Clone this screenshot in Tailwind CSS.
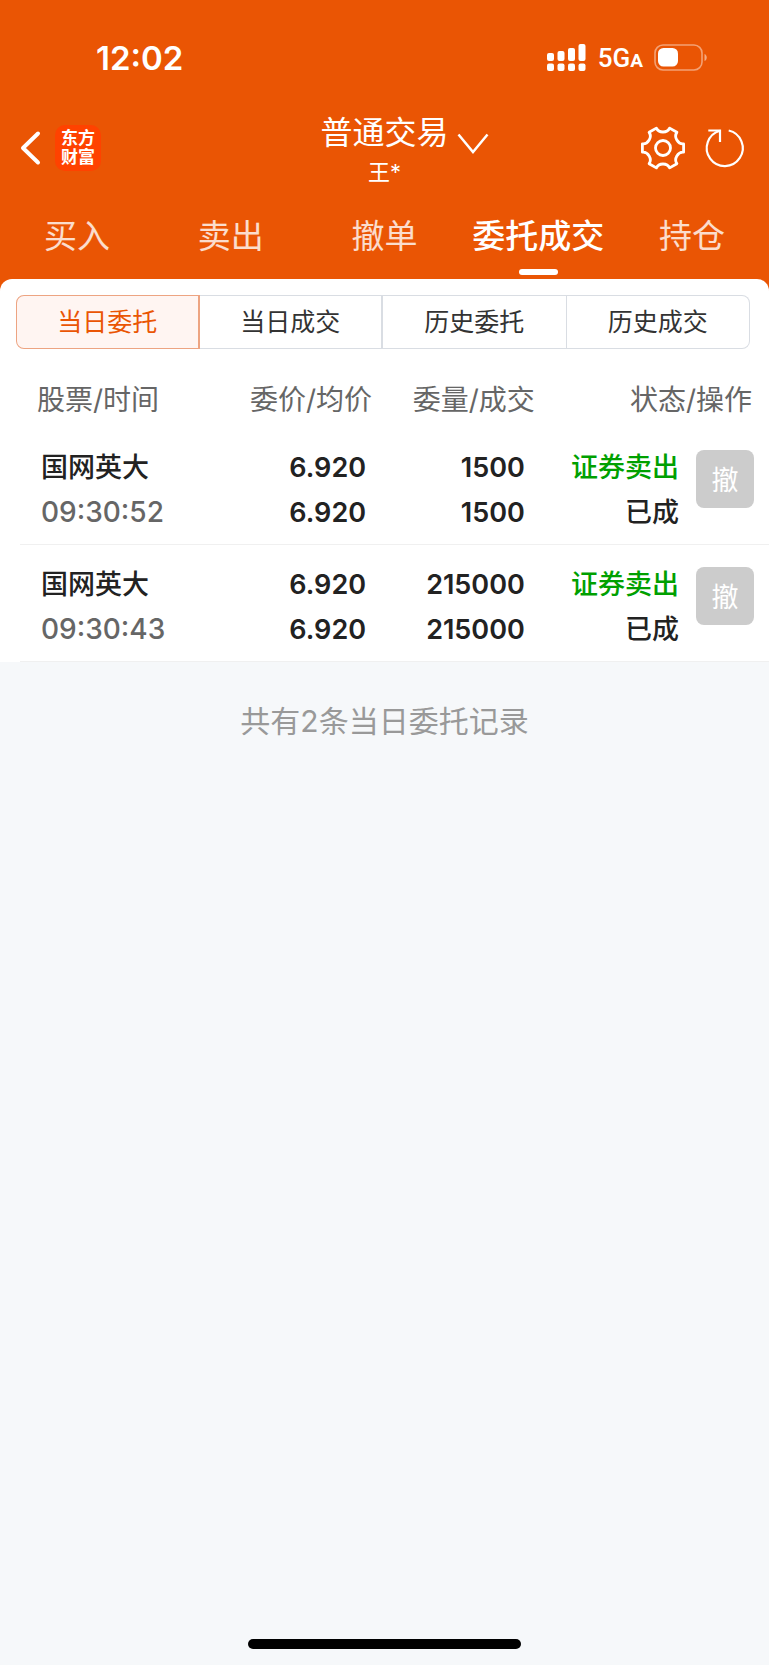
<!DOCTYPE html>
<html lang="zh-CN">
<head>
  <meta charset="UTF-8" />
  <meta name="viewport" content="width=device-width, initial-scale=1.0"/>
  <title>普通交易 | 委托成交</title>
  <script src="https://cdn.jsdelivr.net/npm/@tailwindcss/browser@4"></script>
</head>
<body class="flex min-h-screen flex-col bg-[#f6f8fa] font-['Inter','Noto_Sans_CJK_SC',sans-serif] text-[#222222]">

  <header class="bg-[#ea5504] text-white">
    <!-- Status bar -->
    <div class="flex h-[112px] items-center justify-between pt-[3px] pr-[61px] pl-24">
      <span class="text-[33px] leading-10 font-semibold">12:02</span>
      <div class="flex items-center">
        <svg class="h-7 w-[39px]" viewBox="0 0 39 28" fill="currentColor" aria-hidden="true">
          <rect x="0" y="9" width="7" height="8" rx="2"/>
          <rect x="10.5" y="7" width="7" height="10" rx="2"/>
          <rect x="21" y="4" width="7" height="13" rx="2"/>
          <rect x="31.5" y="0" width="7" height="17" rx="2"/>
          <rect x="0" y="19.500" width="7" height="7.500" rx="2"/>
          <rect x="10.5" y="19.500" width="7" height="7.500" rx="2"/>
          <rect x="21" y="19.500" width="7" height="7.500" rx="2"/>
          <rect x="31.5" y="19.500" width="7" height="7.500" rx="2"/>
        </svg>
        <span class="ml-3 pt-1 font-['Roboto',sans-serif] text-[26px] leading-8 font-medium">5G<span class="text-[19px] font-bold">A</span></span>
        <svg class="ml-[11px] h-7 w-[54px]" viewBox="0 0 54 28" aria-hidden="true">
          <rect x="1" y="1" width="47" height="25" rx="8" fill="none" stroke="#fff" stroke-opacity=".45" stroke-width="1.600"/>
          <rect x="4" y="4" width="20" height="18.500" rx="5.500" fill="#fff"/>
          <path d="M50.500 10c3 1 3 6 0 7z" fill="#fff" fill-opacity=".5"/>
        </svg>
      </div>
    </div>

    <!-- Title row -->
    <div class="grid h-[72px] grid-cols-[1fr_auto_1fr] items-center">
      <div class="flex items-center pl-5">
        <button type="button" aria-label="返回">
          <svg class="h-9 w-[22px]" viewBox="0 0 22 36" fill="none" stroke="currentColor" stroke-width="4" stroke-linecap="round" stroke-linejoin="round">
            <path d="M18 3.500 3 18l15 14.500"/>
          </svg>
        </button>
        <a href="#" class="ml-[13px] flex size-[46px] flex-col items-center justify-center rounded-[10px] bg-[#ff4200] text-[17px] leading-[19px] font-bold">
          <span>东方</span>
          <span>财富</span>
        </a>
      </div>
      <button type="button" class="relative text-center">
        <span class="block text-[32px] leading-[42px]">普通交易</span>
        <span class="mt-1.5 block text-[22px] leading-6">王*</span>
        <svg class="absolute top-5 left-full ml-2 h-6 w-8" viewBox="0 0 32 24" fill="none" stroke="currentColor" stroke-width="2.500">
          <path d="M1.500 2.500 16 20l14.500-17.500"/>
        </svg>
      </button>
      <div class="flex items-center justify-end gap-[14px] pr-5">
        <button type="button" aria-label="设置">
          <svg class="size-12" viewBox="0 0 48 48" fill="none" stroke="currentColor" stroke-width="2.800" stroke-linejoin="round">
            <path d="M17.400 4.100C19.700 9.300 28.300 9.300 30.600 4.100L37.900 8.300C34.500 12.900 38.900 20.400 44.600 19.800V28.200C38.900 27.600 34.500 35.100 37.900 39.700L30.600 43.900C28.300 38.700 19.700 38.700 17.400 43.900L10.100 39.700C13.500 35.100 9.100 27.600 3.400 28.200V19.800C9.100 20.400 13.500 12.900 10.100 8.300Z"/>
            <circle cx="24" cy="24" r="7.500"/>
          </svg>
        </button>
        <button type="button" aria-label="刷新">
          <svg class="size-12" viewBox="0 0 48 48" fill="none" stroke="currentColor" stroke-width="2.200">
            <path d="M27.700 6.500A18 18 0 1 1 19 6.700"/>
            <path d="M7.300 6.500H19V18"/>
          </svg>
        </button>
      </div>
    </div>

    <!-- Main tabs -->
    <nav class="grid h-[95px] grid-cols-5 pt-7 text-center text-[33px] leading-[48px]">
      <a href="#" class="text-white/80">买入</a>
      <a href="#" class="text-white/80">卖出</a>
      <a href="#" class="text-white/80">撤单</a>
      <a href="#" class="flex flex-col items-center font-medium whitespace-nowrap" aria-current="page">
        委托成交
        <span class="mt-[9px] h-1.5 w-[39px] rounded-[3px] bg-white"></span>
      </a>
      <a href="#" class="text-white/80">持仓</a>
    </nav>
  </header>

  <main class="bg-[#ea5504]">
    <div class="rounded-t-xl bg-white pt-4">
      <!-- Order filters -->
      <div class="mr-[19px] ml-4 grid h-[54px] grid-cols-4 text-[25px] text-[#333333]">
        <button type="button" class="rounded-l-lg border border-r-2 border-[#eda482] bg-[#fff5f2] pt-0.5 text-[#ea5504]">当日委托</button>
        <button type="button" class="border-y border-r-2 border-[#d9dde3] pt-0.5">当日成交</button>
        <button type="button" class="border-y border-r border-[#d9dde3] pt-0.5">历史委托</button>
        <button type="button" class="rounded-r-lg border border-l-0 border-[#d9dde3] pt-0.5">历史成交</button>
      </div>

      <!-- Orders -->
      <div class="pt-[23px] pl-5">
        <table class="w-full table-fixed text-right text-[27px] leading-[45px]">
          <colgroup>
            <col class="w-[26%]"/>
            <col class="w-[21%]"/>
            <col class="w-[22%]"/>
            <col/>
            <col class="w-[88px]"/>
          </colgroup>
          <thead>
            <tr class="h-14 text-[28px] whitespace-nowrap text-[#666666]">
              <th class="pl-[17px] text-left font-normal">股票/时间</th>
              <th class="font-normal">委价/均价</th>
              <th class="pr-0.5 font-normal">委量/成交</th>
              <th colspan="2" class="pr-[17px] font-normal">状态/操作</th>
            </tr>
          </thead>
          <tbody class="font-semibold">
            <tr class="border-b border-[#f0f0f0] align-top">
              <td class="pt-[17px] pb-[9px] pl-[21px] text-left font-medium"><p>国网英大</p><p class="text-[28px] text-[#666666]">09:30:52</p></td>
              <td class="pt-[17px] pr-1.5"><p>6.920</p><p>6.920</p></td>
              <td class="pt-[17px] pr-3"><p>1500</p><p>1500</p></td>
              <td class="pt-[17px] pr-0.5 font-medium"><p class="text-[#00a000]">证券卖出</p><p>已成</p></td>
              <td class="pt-[22px] pr-[15px]"><button type="button" class="size-[58px] rounded-lg bg-[#cccccc] pt-0.5 align-top font-normal text-white">撤</button></td>
            </tr>
            <tr class="border-b border-[#f0f0f0] align-top">
              <td class="pt-[17px] pb-[9px] pl-[21px] text-left font-medium"><p>国网英大</p><p class="text-[28px] text-[#666666]">09:30:43</p></td>
              <td class="pt-[17px] pr-1.5"><p>6.920</p><p>6.920</p></td>
              <td class="pt-[17px] pr-3"><p>215000</p><p>215000</p></td>
              <td class="pt-[17px] pr-0.5 font-medium"><p class="text-[#00a000]">证券卖出</p><p>已成</p></td>
              <td class="pt-[22px] pr-[15px]"><button type="button" class="size-[58px] rounded-lg bg-[#cccccc] pt-0.5 align-top font-normal text-white">撤</button></td>
            </tr>
          </tbody>
        </table>
      </div>
    </div>
  </main>

  <p class="pt-[39px] text-center text-[30px] leading-10 text-[#999999]">共有2条当日委托记录</p>

  <!-- Home indicator -->
  <div class="mt-auto flex justify-center pb-4">
    <span class="h-2.5 w-[273px] rounded-full bg-black"></span>
  </div>
</body>
</html>
